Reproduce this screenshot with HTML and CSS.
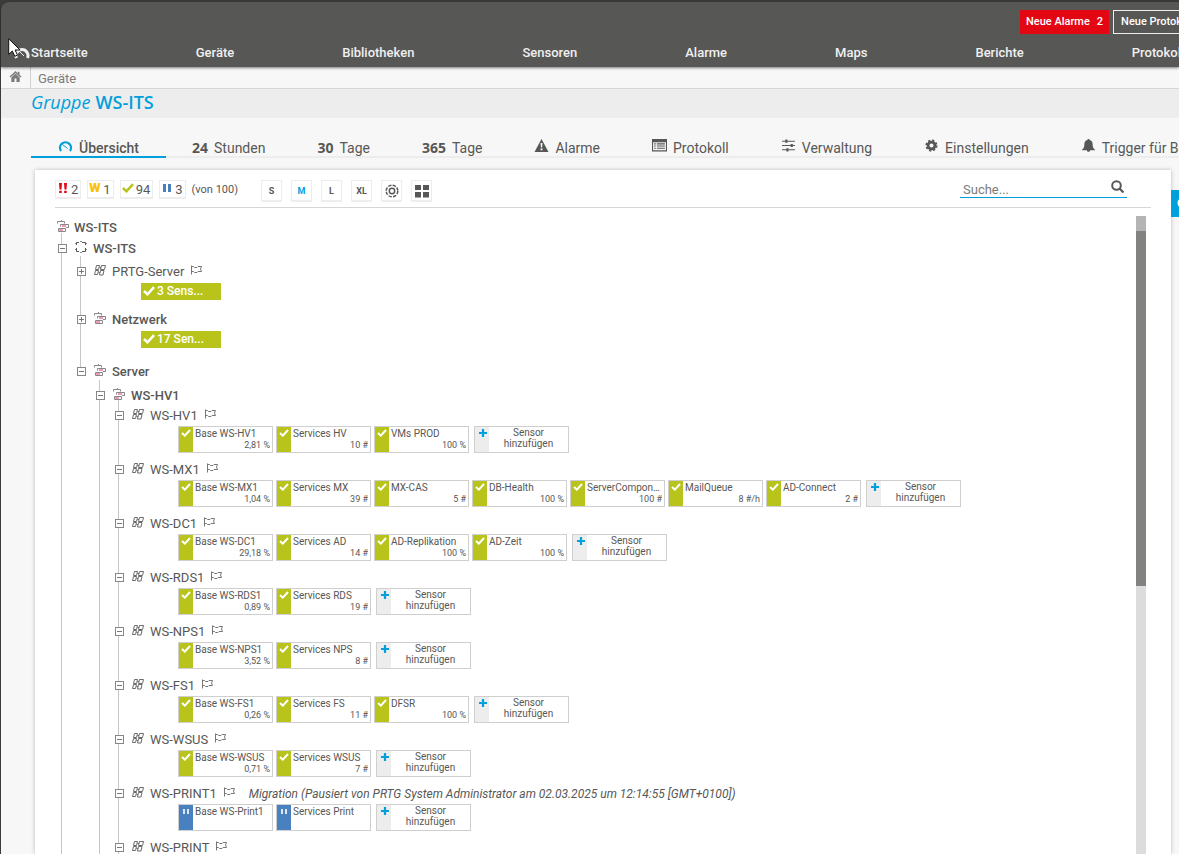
FILE: index.html
```html
<!DOCTYPE html>
<html lang="de">
<head>
<meta charset="utf-8">
<title>WS-ITS</title>
<link rel="stylesheet" href="styles.css">
</head>
<body>
<svg class="defs" aria-hidden="true">
  <symbol id="check" viewBox="0 0 12 10"><path d="M1 5 4.500 8.300 11 1.200" fill="none" stroke="currentColor" stroke-width="2.500"/></symbol>
  <symbol id="pause" viewBox="0 0 12 10"><path d="M2 1h3v8H2zM7 1h3v8H7z" fill="currentColor"/></symbol>
  <symbol id="pause-small" viewBox="0 0 10 8"><path d="M2 2h2v5H2zM6 2h2v5H6z" fill="#dfe9f5"/></symbol>
  <symbol id="group" viewBox="0 0 12 12"><path d="M.5 3.500v-2h7v2M4.500 0v1M3.500 6.500v-2h8v3H9" fill="none" stroke="#888"/><path d="M5 5h4v2H5zM2 9h4v2H2z" fill="#f29ab5"/><path d="M1.500 8.500h7v3h-7z" fill="none" stroke="#888"/></symbol>
  <symbol id="probe" viewBox="0 0 12 12"><path d="M1.500 4V1.500H4M7 1.500h3.500V4M10.500 7v3.500H7M4 10.500H1.500V7" fill="none" stroke="#555"/><path d="M5 .5h2M5 11.500h2M0 2.500h1M0 8.500h1M11 2.500h1M11 8.500h1" stroke="#888"/></symbol>
  <symbol id="device" viewBox="0 0 12 12"><path d="M2.500 1.500h3l-1 4h-3zM7.500 1.500h4l-1 4h-4zM1.500 6.500h3l-1 4h-3zM6.500 6.500h3.500l-1 4.500h-3.500zM5.500 3.500h1.500M4.500 8.500H6" fill="none" stroke="#6b6b6b"/></symbol>
  <symbol id="flag" viewBox="0 0 12 10"><path d="M1.500.5v9M1.500 1.500h2l1 1H7l1-1h3.500L10.500 4l1 2.500H8l-1 1H4.500l-1-1h-2" fill="none" stroke="#777"/></symbol>
  <symbol id="plus" viewBox="0 0 8 8"><path d="M4 0v8M0 4h8" stroke="currentColor" stroke-width="2.200"/></symbol>
</svg>
<div class="window">
  <header class="header">
    <div class="notices">
      <button class="notice alarm"><span>Neue Alarme</span><span>2</span></button>
      <button class="notice">Neue Protokolleinträge</button>
    </div>
    <nav class="nav">
      <a href="#"><svg class="gauge" viewBox="0 0 16 14"><path d="M2.500 12A6 6 0 1 1 13.500 12" fill="none" stroke="currentColor" stroke-width="3"/><path d="m5 5 5 5" stroke="currentColor"/></svg>Startseite</a>
      <a href="#">Geräte</a><a href="#">Bibliotheken</a><a href="#">Sensoren</a><a href="#">Alarme</a><a href="#">Maps</a><a href="#">Berichte</a><a href="#">Protokolle</a>
    </nav>
  </header>
  <nav class="crumbs">
    <a class="home" href="#" aria-label="Start"><svg viewBox="0 0 12 11"><path d="M6 0 0 5.500l.9 1L6 2l5.100 4.500.9-1L10 3.700V.8H8.500v1.500z"/><path d="M6 2.600 1.800 6.500V11H5V7.500h2V11h3.200V6.500z"/></svg></a>
    <a href="#">Geräte</a>
  </nav>
  <h1 class="title"><i>Gruppe</i><b>WS-ITS</b></h1>
  <nav class="tabs">
    <a class="active" href="#"><svg class="tab-gauge" viewBox="0 0 14 13"><path d="M2.500 11A5.500 5.500 0 1 1 11.500 11" fill="none" stroke="currentColor" stroke-width="2.300"/><path d="m4 4.500 5 4" stroke="currentColor"/></svg>Übersicht</a>
    <a href="#"><b>24</b>Stunden</a>
    <a href="#"><b>30</b>Tage</a>
    <a href="#"><b>365</b>Tage</a>
    <a href="#"><svg viewBox="0 0 14 13"><path fill-rule="evenodd" d="M7 0 14 13H0zM6 4l.4 4.500h1.200L8 4zm0 5.500v1.700h2V9.500z" fill="currentColor"/></svg>Alarme</a>
    <a href="#"><svg viewBox="0 0 14 12"><path d="M.5.5h13v10.500H.5z" fill="none" stroke="currentColor"/><path d="M0 0h14v3H0z" fill="currentColor"/><path d="M2 4.500h1.500M2 6.500h1.500M2 8.500h1.500M4.500 4.500H12M4.500 6.500H12M4.500 8.500H12" stroke="currentColor"/></svg>Protokoll</a>
    <a href="#"><svg viewBox="0 0 14 12"><path d="M1 2h12M1 6h12M1 10h12" stroke="currentColor"/><path d="M4 .5h2v3H4zM9 4.500h2v3H9zM5 8.500h2v3H5z" fill="currentColor"/></svg>Verwaltung</a>
    <a href="#"><svg viewBox="0 0 14 14"><circle cx="7" cy="7" r="3.700" fill="none" stroke="currentColor" stroke-width="3"/><circle cx="7" cy="7" r="5.500" fill="none" stroke="currentColor" stroke-width="2" stroke-dasharray="2.300 2.020"/></svg>Einstellungen</a>
    <a href="#"><svg viewBox="0 0 14 14"><path d="M6 0h2v1.200c2.500.5 3.500 2.300 3.500 5 0 2.800.8 4 2.500 5.300V12H8.800a1.800 1.800 0 0 1-3.600 0H0v-.5C1.700 10.200 2.500 9 2.500 6.200c0-2.700 1-4.500 3.500-5z" fill="currentColor"/></svg>Trigger für Benachrichtigungen</a>
  </nav>
  <div class="stage">
    <main class="panel">
      <div class="toolbar">
        <div class="states">
          <a href="#"><svg class="red" viewBox="0 0 12 10"><path d="M2 0h3l-.5 6.500h-2zM7 0h3l-.5 6.500h-2zM2.200 7.700h2.500V10H2.200zM7.200 7.700h2.500V10H7.200z" fill="currentColor"/></svg>2</a>
          <a href="#"><b class="warn">W</b>1</a>
          <a href="#"><svg class="green"><use href="#check"/></svg>94</a>
          <a href="#"><svg class="blue"><use href="#pause"/></svg>3</a>
          <span>(von 100)</span>
        </div>
        <div class="sizes">
          <button>S</button><button class="on">M</button><button>L</button><button>XL</button>
          <button aria-label="Kreisansicht"><svg viewBox="0 0 14 14" fill="none" stroke="currentColor"><circle cx="7" cy="7" r="2.700" stroke-width="1.500"/><circle cx="7" cy="7" r="5.800" stroke-width="1.500" stroke-dasharray="3.300 1.250"/></svg></button>
          <button aria-label="Kacheln"><svg viewBox="0 0 14 14"><path d="M0 1h6v5H0zM8 1h6v5H8zM0 8h6v5.500H0zM8 8h6v5.500H8z" fill="currentColor"/></svg></button>
        </div>
        <form class="search"><input type="text" placeholder="Suche..." aria-label="Suche"><button type="button" aria-label="Suchen"><svg viewBox="0 0 13 13" fill="none" stroke="currentColor"><circle cx="5.500" cy="5.500" r="4.300" stroke-width="2"/><path d="m8.500 8.500 4 4" stroke-width="2.200"/></svg></button></form>
      </div>
      <div class="treebox">
        <div class="tree" id="tree"></div>
        <div class="track"><div class="thumb"></div></div>
      </div>
    </main>
    <button class="drawer" aria-label="Seitenleiste"><svg viewBox="0 0 12 12"><circle cx="6" cy="6" r="5.500" fill="currentColor"/></svg></button>
  </div>
</div>
<svg class="cursor" viewBox="0 0 14 20"><path d="M.7.8v15.500l3.600-3.300 2.500 5.300 2.700-1.200-2.400-5.100h5z" fill="#fff" stroke="#111"/></svg>
<script src="tree.js"></script>
</body>
</html>
```
FILE: styles.css
```css
* { box-sizing: border-box; }
body { margin: 0; background: #3c3c3b; color: #575756; font: 13px/20px Roboto, sans-serif; overflow: hidden; }
a { color: inherit; text-decoration: none; }
button { margin: 0; padding: 0; border: 0; background: none; color: inherit; font: inherit; }
ul { list-style: none; margin: 0; padding: 0; }
.defs { display: none; }
.window { display: flex; flex-direction: column; height: 100vh; padding: 2px 0 0 1px; overflow: hidden; }
.window > * { flex: none; }
.header { display: flex; flex-direction: column; justify-content: space-between; height: 65px; padding: 8px 0 4px; background: #575756; border-top-left-radius: 8px; box-shadow: 0 1px 3px rgba(0,0,0,.5); position: relative; white-space: nowrap; color: #f0f0f0; font-weight: 500; }
.notices { display: flex; gap: 4px; margin-left: calc(100% - 159px); font-size: 11px; }
.notice { flex: none; display: flex; align-items: center; gap: 7px; height: 24px; padding: 0 7px; border: 1px solid #ededed; color: #fff; font-weight: 500; }
.alarm { background: #e30613; border-color: #e30613; padding: 0 5px; }
.nav { display: flex; gap: 108px; padding-left: 13px; }
.nav a { flex: none; display: flex; align-items: center; }
.gauge { width: 16px; height: 14px; margin-right: 1px; }
.crumbs { display: flex; height: 22px; align-items: center; background: #f7f7f7; border-bottom: 1px solid #d6d6d6; color: #7c7c7b; }
.crumbs a { padding-left: 7px; padding-top: 2px; }
.crumbs .home { width: 30px; height: 21px; padding: 4px 0 0 8px; border-right: 1px solid #d0d0d0; line-height: 0; }
.home svg { width: 13px; height: 11px; fill: #7c7c7b; }
.title { display: flex; gap: 5px; margin: 0; height: 29px; padding-left: 30px; background: #ededed; color: #00a0dc; font: 18px/26px "Open Sans", sans-serif; }
.title b { font-weight: 600; }
.tabs { display: flex; padding: 20px 0 0 30px; font-size: 14px; white-space: nowrap; background: linear-gradient(#ededed, #ededed) 30px 100% / 100% 2px no-repeat #f7f7f7; }
.tabs a { flex: none; display: flex; align-items: center; gap: 6px; height: 20px; padding: 2px 26px 0; border-bottom: 2px solid transparent; }
.tabs svg { width: 15px; height: 13px; margin-bottom: 5px; }
.tabs .tab-gauge { color: #00a0dc; margin-bottom: 3px; }
.tabs .active { padding: 2px 27px 0; border-color: #00a0dc; font-weight: 500; }
.tabs b { font-family: "Open Sans", sans-serif; font-weight: 700; }
.stage { flex: 1 1 0; min-height: 0; position: relative; display: flex; padding: 12px 8px 0 34px; background: #f7f7f7; }
.panel { flex: 1; min-width: 0; display: flex; flex-direction: column; padding: 10px 20px 0; background: #fff; box-shadow: 0 0 4px rgba(0,0,0,.25); }
.toolbar { display: flex; flex: none; height: 28px; border-bottom: 1px solid #d6d6d6; }
.states { display: flex; gap: 6px; height: 19px; width: 206px; white-space: nowrap; }
.states a { display: flex; align-items: center; gap: 2px; padding: 2px 2px 0 1px; border: 1px solid #ededed; border-bottom-width: 2px; }
.states svg { width: 12px; height: 10px; margin-bottom: 4px; }
.states span { font-size: 11px; }
.warn { width: 12px; margin-bottom: 4px; color: #f9c200; font-weight: 900; }
.red { color: #e30613; }
.green { color: #b8c41c; }
.blue { color: #4880c0; }
.sizes { display: flex; gap: 9px; }
.sizes button { width: 21px; height: 22px; display: grid; place-items: center; border: 1px solid #ededed; border-bottom-width: 2px; font-size: 9px; font-weight: 700; }
.sizes .on { color: #00a0dc; }
.sizes svg { width: 14px; height: 14px; }
.search { display: flex; width: 167px; height: 18px; margin: 0 24px 0 auto; border-bottom: 1px solid #00a0dc; }
.search input { flex: 1; min-width: 0; padding: 2px 3px 0; border: 0; background: none; color: inherit; font: inherit; outline: 0; }
.search input::placeholder { color: #7c7c7b; }
.search button { width: 20px; line-height: 0; }
.search svg { width: 13px; height: 13px; margin-bottom: 5px; }
.treebox { flex: 1; min-height: 0; display: flex; gap: 10px; padding: 8px 5px 0 0; overflow: hidden; }
.tree { flex: 1; min-width: 0; padding-top: 1px; }
.track { width: 10px; padding-top: 15px; background: linear-gradient(#b4b4b4, #b4b4b4) 0 0 / 100% 15px no-repeat #dcdcdc; }
.thumb { height: 57%; background: #828381; }
.row { display: flex; align-items: center; height: 20px; white-space: nowrap; }
.row a, .row em { padding-top: 2px; }
.row svg { flex: none; width: 12px; height: 12px; margin-right: 5px; margin-bottom: 2px; }
.root { padding-left: 2px; }
.row .flag { width: 12px; height: 10px; margin: 0 0 2px 6px; }
.row em { margin-left: 14px; font-size: 12px; }
.strong { font-weight: 500; }
.tree ul { padding-left: 18px; }
.tree > ul { padding: 1px 0 0 6px; }
.tree li { position: relative; padding-left: 1px; }
.tree li::before { content: ""; position: absolute; left: 0; top: -5px; bottom: 0; width: 1px; background: #c6c6c6; }
.tree li.last::before { bottom: auto; height: 16px; }
.toggle { position: relative; flex: none; width: 9px; height: 9px; margin: 0 8px 0 -4px; border: 1px solid #878787; background: linear-gradient(#777, #777) 50% 50% / 5px 1px no-repeat #fff; }
.toggle.closed { background: linear-gradient(#777, #777) 50% 50% / 5px 1px no-repeat, linear-gradient(#777, #777) 50% 50% / 1px 5px no-repeat #fff; }
.toggle + svg { margin-right: 6px; }
.tree .l3 { padding-top: 3px; }
.l3 > li { padding-bottom: 9px; }
.l3 > .wide { padding-bottom: 13px; }
.tree .l4 { padding-top: 4px; }
.summary { display: flex; align-items: center; gap: 2px; width: 80px; height: 17px; margin: 2px 0 0 60px; padding: 0 0 1px 2px; background: #b8c41c; color: #fff; font-size: 12px; font-weight: 500; line-height: 16px; }
.summary svg { width: 12px; height: 10px; }
.sensors { display: flex; gap: 3px; height: 34px; padding: 1px 0 6px 59px; }
.sensor { flex: none; display: flex; width: 95px; height: 27px; border: 1px solid #cfcfcf; font-size: 10px; line-height: 11px; }
.mark { flex: none; display: block; width: 14px; padding: 2px; background: #b8c41c; color: #fff; line-height: 0; }
.mark svg { width: 10px; height: 8px; }
.paused .mark { background: #4880c0; }
.info { flex: 1; min-width: 0; padding: 1px 2px 0; display: flex; flex-direction: column; }
.info span { overflow: hidden; text-overflow: ellipsis; white-space: nowrap; }
.info .value { align-self: flex-end; margin-top: 1px; font-size: 9px; }
.add { margin-left: 2px; text-align: center; }
.add .mark { background: #ededed; color: #00a0dc; padding: 2px 4px; }
.add .mark svg { width: 8px; height: 8px; }
.add .info { padding-top: 0; }
.drawer { position: absolute; right: 0; top: 32px; display: flex; width: 8px; height: 27px; padding: 7px 0 0 6px; background: #00a0dc; color: #fff; overflow: hidden; }
.drawer svg { flex: none; width: 12px; height: 12px; }
.cursor { position: absolute; left: 8px; top: 38px; width: 14px; height: 20px; }
```
FILE: tree.js
```js
const icon = (id, cls = "") => `<svg class="${cls}"><use href="#${id}"/></svg>`;
const toggle = (closed) => `<button class="toggle${closed ? " closed" : ""}" aria-label="${closed ? "Aufklappen" : "Zuklappen"}"></button>`;
const row = (kind, name, closed, note = "") =>
  `<div class="row">${toggle(closed)}${icon(kind)}<a href="#"${kind === "device" ? "" : ' class="strong"'}>${name}</a>` +
  `${kind === "device" ? icon("flag", "flag") : ""}${note ? `<em>${note}</em>` : ""}</div>`;
const summary = (text) => `<a class="summary" href="#">${icon("check")}${text}</a>`;
const sensor = ([name, value]) =>
  `<a href="#" class="sensor${value ? "" : " paused"}"><span class="mark">${icon(value ? "check" : "pause-small")}</span>` +
  `<span class="info"><span>${name}</span><span class="value">${value || ""}</span></span></a>`;
const add = `<button class="sensor add"><span class="mark">${icon("plus")}</span><span class="info"><span>Sensor</span><span>hinzufügen</span></span></button>`;

const devices = [
  ["WS-HV1", [["Base WS-HV1", "2,81 %"], ["Services HV", "10 #"], ["VMs PROD", "100 %"]]],
  ["WS-MX1", [["Base WS-MX1", "1,04 %"], ["Services MX", "39 #"], ["MX-CAS", "5 #"], ["DB-Health", "100 %"], ["ServerComponents", "100 #"], ["MailQueue", "8 #/h"], ["AD-Connect", "2 #"]]],
  ["WS-DC1", [["Base WS-DC1", "29,18 %"], ["Services AD", "14 #"], ["AD-Replikation", "100 %"], ["AD-Zeit", "100 %"]]],
  ["WS-RDS1", [["Base WS-RDS1", "0,89 %"], ["Services RDS", "19 #"]]],
  ["WS-NPS1", [["Base WS-NPS1", "3,52 %"], ["Services NPS", "8 #"]]],
  ["WS-FS1", [["Base WS-FS1", "0,26 %"], ["Services FS", "11 #"], ["DFSR", "100 %"]]],
  ["WS-WSUS", [["Base WS-WSUS", "0,71 %"], ["Services WSUS", "7 #"]]],
  ["WS-PRINT1", [["Base WS-Print1"], ["Services Print"]], "Migration (Pausiert von PRTG System Administrator am 02.03.2025 um 12:14:55 [GMT+0100])"],
  ["WS-PRINT", []],
];

document.getElementById("tree").innerHTML =
  `<div class="row root">${icon("group")}<a href="#" class="strong">WS-ITS</a></div>
  <ul><li>${row("probe", "WS-ITS")}
    <ul class="l3">
      <li>${row("device", "PRTG-Server", true)}${summary("3 Sens...")}</li>
      <li class="wide">${row("group", "Netzwerk", true)}${summary("17 Sen...")}</li>
      <li class="last">${row("group", "Server")}
        <ul class="l4"><li>${row("group", "WS-HV1")}
          <ul>${devices.map(([name, sensors, note]) =>
            `<li>${row("device", name, false, note)}<div class="sensors">${sensors.map(sensor).join("")}${add}</div></li>`).join("")}</ul>
        </li></ul>
      </li>
    </ul>
  </li></ul>`;
```
